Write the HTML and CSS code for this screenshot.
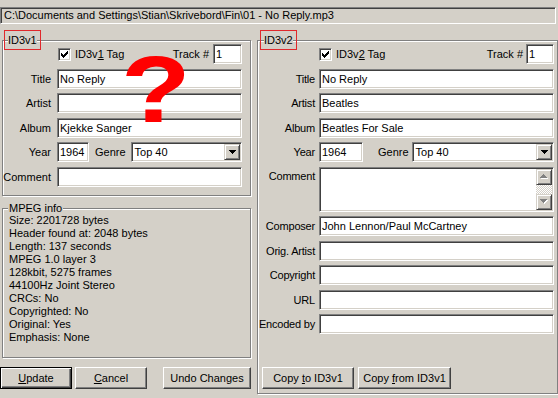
FILE: index.html
```html
<!DOCTYPE html>
<html lang="en">
<head>
    <meta charset="UTF-8">
    <title>Tag Editor</title>
    <link rel="stylesheet" href="styles.css">
</head>
<body>
    <div class="path">C:\Documents and Settings\Stian\Skrivebord\Fin\01 - No Reply.mp3</div>

    <div class="main">
        <div class="left">
            <div class="group v1">
                <div class="legend mark">ID3v1</div>
                <div class="form">
                    <div class="tag-row">
                        <span class="check"><svg width="7" height="7"><path d="M6 0h1v1h-1zM5 1h2v1h-2zM0 2h1v1h-1zM4 2h3v1h-3zM0 3h2v1h-2zM3 3h3v1h-3zM0 4h5v1h-5zM1 5h3v1h-3zM2 6h1v1h-1z"/></svg></span>
                        <span class="tag-label">ID3v<u>1</u> Tag</span>
                        <span class="track-label">Track #</span>
                        <input class="field track" value="1">
                    </div>
                    <label>Title</label><input class="field" value="No Reply">
                    <label>Artist</label><input class="field" value="">
                    <label>Album</label><input class="field" value="Kjekke Sanger">
                    <label>Year</label>
                    <div class="year-row">
                        <input class="field year" value="1964">
                        <span class="genre-label">Genre</span>
                        <div class="field combo"><span class="combo-text">Top 40</span><span class="bevel drop"><svg width="7" height="4"><path d="M0 0h7v1h-1v1h-1v1h-1v1h-1v-1h-1v-1h-1v-1h-1z"/></svg></span></div>
                    </div>
                    <label>Comment</label><input class="field" value="">
                </div>
            </div>

            <div class="group mpeg">
                <div class="legend">MPEG info</div>
                <div class="info">
                    <div>Size: 2201728 bytes</div>
                    <div>Header found at: 2048 bytes</div>
                    <div>Length: 137 seconds</div>
                    <div>MPEG 1.0 layer 3</div>
                    <div>128kbit, 5275 frames</div>
                    <div>44100Hz Joint Stereo</div>
                    <div>CRCs: No</div>
                    <div>Copyrighted: No</div>
                    <div>Original: Yes</div>
                    <div>Emphasis: None</div>
                </div>
            </div>

            <div class="buttons">
                <button class="btn default btn-update"><u>U</u>pdate</button>
                <button class="btn btn-cancel"><u>C</u>ancel</button>
                <button class="btn btn-undo">Undo Changes</button>
            </div>
        </div>

        <div class="group v2">
            <div class="legend mark">ID3v2</div>
            <div class="form">
                <div class="tag-row">
                    <span class="check"><svg width="7" height="7"><path d="M6 0h1v1h-1zM5 1h2v1h-2zM0 2h1v1h-1zM4 2h3v1h-3zM0 3h2v1h-2zM3 3h3v1h-3zM0 4h5v1h-5zM1 5h3v1h-3zM2 6h1v1h-1z"/></svg></span>
                    <span class="tag-label">ID3v<u>2</u> Tag</span>
                    <span class="track-label">Track #</span>
                    <input class="field track" value="1">
                </div>
                <label>Title</label><input class="field" value="No Reply">
                <label>Artist</label><input class="field" value="Beatles">
                <label>Album</label><input class="field" value="Beatles For Sale">
                <label>Year</label>
                <div class="year-row">
                    <input class="field year" value="1964">
                    <span class="genre-label">Genre</span>
                    <div class="field combo"><span class="combo-text">Top 40</span><span class="bevel drop"><svg width="7" height="4"><path d="M0 0h7v1h-1v1h-1v1h-1v1h-1v-1h-1v-1h-1v-1h-1z"/></svg></span></div>
                </div>
                <label class="top">Comment</label>
                <div class="field memo">
                    <div class="memo-text"></div>
                    <div class="scroll">
                        <span class="bevel sbtn"><svg width="8" height="5"><path fill="#fff" d="M4 1h1v1h1v1h1v1h1v1h-7v-1h1v-1h1v-1h1z"/><path fill="#808080" d="M3 0h1v1h1v1h1v1h1v1h-7v-1h1v-1h1v-1h1z"/></svg></span>
                        <span class="strack"></span>
                        <span class="bevel sbtn"><svg width="8" height="5"><path fill="#fff" d="M1 1h7v1h-1v1h-1v1h-1v1h-1v-1h-1v-1h-1v-1h-1z"/><path fill="#808080" d="M0 0h7v1h-1v1h-1v1h-1v1h-1v-1h-1v-1h-1v-1h-1z"/></svg></span>
                    </div>
                </div>
                <label>Composer</label><input class="field" value="John Lennon/Paul McCartney">
                <label>Orig. Artist</label><input class="field" value="">
                <label>Copyright</label><input class="field" value="">
                <label>URL</label><input class="field" value="">
                <label>Encoded by</label><input class="field" value="">
            </div>
            <div class="buttons">
                <button class="btn btn-copy-to">Copy <u>t</u>o ID3v1</button>
                <button class="btn btn-copy-from">Copy <u>f</u>rom ID3v1</button>
            </div>
        </div>
    </div>

    <div class="question">?</div>
</body>
</html>
```

FILE: styles.css
```css
* {
    box-sizing: border-box;
}
body {
    margin: 0;
    width: 558px;
    height: 398px;
    overflow: hidden;
    position: relative;
    background: #d4d0c8;
    color: #000;
    font-family: "Liberation Sans", Arial, sans-serif;
    font-size: 11px;
}
u {
    text-decoration-thickness: 1px;
}

/* sunken 3d edge used by edits, combo and path */
.path, .field, .check {
    border: 1px solid;
    border-color: #808080 #fff #fff #808080;
    box-shadow: inset 1px 1px #404040, inset -1px -1px #d4d0c8;
}
.bevel {
    border: 1px solid;
    border-color: #d4d0c8 #404040 #404040 #d4d0c8;
    box-shadow: inset 1px 1px #fff, inset -1px -1px #808080;
    background: #d4d0c8;
    display: flex;
    align-items: center;
    justify-content: center;
}

.path {
    margin: 7px 2px 0 0;
    height: 17px;
    padding: 1px 3px;
    line-height: 13px;
    white-space: nowrap;
    overflow: hidden;
}

.main {
    display: flex;
    gap: 6px;
    margin-top: 16px;
}
.left {
    width: 251px;
    display: flex;
    flex-direction: column;
}

.group {
    border: 1px solid #808080;
    box-shadow: inset 1px 1px #fff, 1px 1px #fff;
}
.left .group {
    margin-left: 2px;
    width: 249px;
}
.v1 {
    height: 156px;
}
.mpeg {
    height: 150px;
    margin-top: 12px;
}
.v2 {
    width: 301px;
    height: 354px;
    display: flex;
    flex-direction: column;
    padding: 0 3px 4px 0;
}

.legend {
    width: fit-content;
    margin: -7px 0 -2px 5px;
    line-height: 12px;
    background: #d4d0c8;
}
.mpeg .legend {
    padding: 0 1px;
    margin-bottom: 0;
}
.v2 .legend {
    margin-left: 6px;
}
.mark {
    outline: 1px solid #e0282c;
    outline-offset: 3px;
}

.form {
    display: grid;
    grid-template-columns: 49px 185px;
    grid-auto-rows: 20px;
    column-gap: 5px;
    row-gap: 4.5px;
    align-items: center;
}
.v2 .form {
    grid-template-columns: 59px 235px;
    grid-template-rows: 20px 20px 20px 20px 20px 45px;
    column-gap: 2px;
}
.form label {
    text-align: right;
    padding-right: 1px;
    white-space: nowrap;
}
.v2 .form label {
    padding-right: 2px;
    letter-spacing: -0.2px;
}
.form label.top {
    align-self: start;
    padding-top: 3px;
}

.field {
    height: 20px;
    width: 100%;
    margin: 0;
    padding: 0 2px;
    background: #fff;
    font: inherit;
    color: #000;
    outline: none;
}

.tag-row {
    grid-column: 2;
    display: flex;
    align-items: center;
}
.check {
    width: 13px;
    height: 13px;
    margin-left: 1px;
    background: #fff;
    display: flex;
    align-items: center;
    justify-content: center;
}
.v2 .check {
    margin-left: 0;
}
.tag-label {
    margin-left: 4px;
}
.track-label {
    margin-left: auto;
    margin-right: 4px;
}
.field.track {
    width: 29px;
}
.v2 .track-label {
    margin-right: 3px;
}
.v2 .field.track {
    width: 28px;
}

.year-row {
    display: flex;
    align-items: center;
}
.field.year {
    width: 32px;
    flex: none;
}
.genre-label {
    margin: 0 5px 0 6px;
}
.v2 .field.year {
    width: 44px;
}
.v2 .genre-label {
    margin: 0 3px 0 15px;
}
.combo {
    flex: 1;
    display: flex;
    align-items: center;
    padding: 1px;
}
.combo-text {
    flex: 1;
    padding-left: 2px;
}
.drop {
    width: 16px;
    height: 16px;
}

.memo {
    height: 45px;
    display: flex;
    padding: 1px;
    align-self: start;
}
.memo-text {
    flex: 1;
}
.scroll {
    width: 16px;
    display: flex;
    flex-direction: column;
}
.sbtn {
    height: 16px;
}
.strack {
    flex: 1;
    background: repeating-conic-gradient(#fff 0 25%, #d4d0c8 0 50%) 0 0 / 2px 2px;
}

.info {
    padding-left: 6px;
    line-height: 13px;
}

.buttons {
    display: flex;
    margin-top: 9px;
}
.v2 .buttons {
    margin-top: auto;
    margin-left: 4px;
    gap: 4px;
}
.btn {
    height: 22px;
    margin: 0;
    padding: 0;
    font: inherit;
    color: #000;
    background: #d4d0c8;
    border: 1px solid;
    border-color: #fff #404040 #404040 #fff;
    box-shadow: inset -1px -1px #808080;
}
.btn.default {
    border-color: #000;
    box-shadow: inset 1px 1px #fff, inset -1px -1px #404040, inset -2px -2px #808080;
}
.btn-update { width: 72px; }
.btn-cancel { width: 72px; margin-left: 3px; }
.btn-undo { width: 88px; margin-left: 16px; }
.btn-copy-to { width: 92px; }
.btn-copy-from { width: 93px; }

/* red annotation drawn over the dialog */
.question {
    position: absolute;
    left: 121px;
    top: 42px;
    font-size: 95px;
    line-height: 1;
    font-weight: bold;
    color: #f00;
    transform: scaleX(1.2);
    transform-origin: left top;
}
```
